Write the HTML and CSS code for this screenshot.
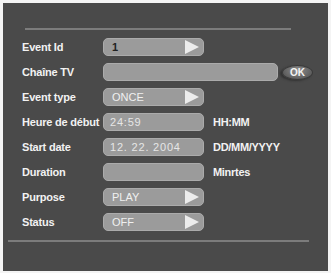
FILE: index.html
```html
<!DOCTYPE html>
<html lang="fr">
<head>
    <meta charset="UTF-8">
    <title>Event</title>
    <link rel="stylesheet" href="styles.css">
</head>
<body>
    <div class="panel">
        <div class="rule top-rule"></div>
        <div class="form">
            <div class="row">
                <label class="label">Event Id</label>
                <div class="field select dark-text">1<span class="arrow"></span></div>
            </div>
            <div class="row">
                <label class="label">Chaîne TV</label>
                <div class="field wide"></div>
                <button class="ok">OK</button>
            </div>
            <div class="row">
                <label class="label">Event type</label>
                <div class="field select">ONCE<span class="arrow"></span></div>
            </div>
            <div class="row">
                <label class="label">Heure de début</label>
                <div class="field digits">24:59</div>
                <span class="unit">HH:MM</span>
            </div>
            <div class="row">
                <label class="label">Start date</label>
                <div class="field digits">12. 22. 2004</div>
                <span class="unit">DD/MM/YYYY</span>
            </div>
            <div class="row">
                <label class="label">Duration</label>
                <div class="field"></div>
                <span class="unit">Minrtes</span>
            </div>
            <div class="row">
                <label class="label">Purpose</label>
                <div class="field select">PLAY<span class="arrow"></span></div>
            </div>
            <div class="row">
                <label class="label">Status</label>
                <div class="field select">OFF<span class="arrow"></span></div>
            </div>
        </div>
        <div class="rule bottom-rule"></div>
    </div>
</body>
</html>
```
FILE: styles.css
```css
body {
    margin: 0;
    background: #f4f4f4;
    font-family: "Liberation Sans", Arial, sans-serif;
}
.panel {
    margin: 3px 3px 2px 3px;
    height: 268px;
    background-color: #4a4a4a;
    padding-top: 25px;
    box-sizing: border-box;
}
.rule {
    height: 2px;
    background-color: #7c7c7c;
}
.top-rule {
    margin: 0 37px 0 22px;
}
.bottom-rule {
    margin: 9px 19px 0 5px;
}
.form {
    display: flex;
    flex-direction: column;
    gap: 7px;
    margin-top: 8px;
    padding-left: 19px;
}
.row {
    display: flex;
    align-items: center;
    height: 18px;
}
.label {
    width: 81px;
    color: #f2f2f2;
    font-size: 11px;
    font-weight: bold;
    letter-spacing: -0.2px;
}
.field {
    position: relative;
    box-sizing: border-box;
    width: 101px;
    height: 18px;
    background-color: #9b9b9b;
    border: 1px solid #ababab;
    border-radius: 5px;
    color: #f0f0f0;
    font-size: 11px;
    line-height: 16px;
    padding-left: 8px;
}
.field.wide {
    width: 175px;
}
.dark-text {
    color: #222;
    font-weight: bold;
}
.digits {
    color: #e6e6e6;
    padding-left: 6px;
    letter-spacing: 0.8px;
}
.arrow {
    position: absolute;
    right: 4px;
    top: 1px;
    width: 0;
    height: 0;
    border-top: 7px solid transparent;
    border-bottom: 7px solid transparent;
    border-left: 14px solid #ececec;
}
.unit {
    margin-left: 9px;
    color: #f2f2f2;
    font-size: 11px;
    font-weight: bold;
    letter-spacing: -0.3px;
}
.ok {
    margin-left: 4px;
    width: 31px;
    height: 15px;
    padding: 0;
    border: 1px solid #3a3a3a;
    border-radius: 50%;
    background: radial-gradient(ellipse at 50% 35%, #8e8e8e, #5e5e5e 70%);
    box-shadow: -2px 1px 2px #333;
    color: #f4f4f4;
    font-family: "Liberation Sans", Arial, sans-serif;
    font-size: 10px;
    font-weight: bold;
}
```
